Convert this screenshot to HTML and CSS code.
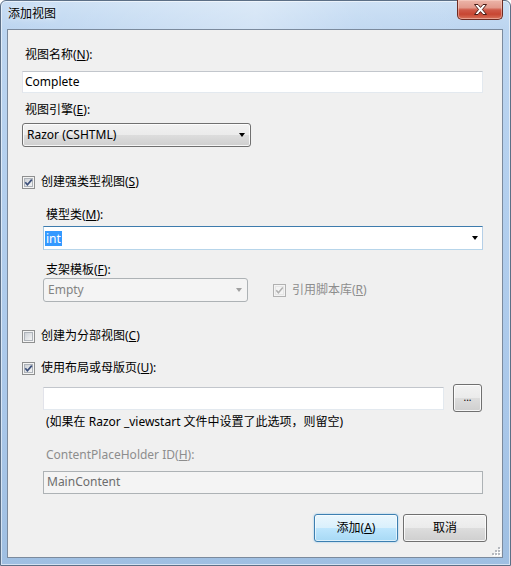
FILE: index.html
```html
<!DOCTYPE html>
<html lang="zh-CN">
<head>
<meta charset="utf-8">
<title>添加视图</title>
<link rel="stylesheet" href="styles.css">
</head>
<body>
<div class="window">
  <div class="titlebar">
    <span class="title">添加视图</span>
    <div class="close">
      <svg width="13" height="11" viewBox="0 0 13 11"><polygon points="0.5,0.5 4,0.5 6.5,3.4 9,0.5 12.5,0.5 8.4,5.5 12.5,10.5 9,10.5 6.5,7.6 4,10.5 0.5,10.5 4.6,5.5" fill="#fff" stroke="#4a1c16" stroke-width="1" stroke-linejoin="round"/></svg>
    </div>
  </div>
  <div class="client">
    <div class="label l1">视图名称(<u>N</u>):</div>
    <div class="textbox tb1">Complete</div>
    <div class="label l2">视图引擎(<u>E</u>):</div>
    <div class="dropbtn sel1"><span>Razor (CSHTML)</span><span class="arrow"></span></div>

    <div class="check-row c1">
      <svg class="cb" width="13" height="13" viewBox="0 0 13 13"><defs><linearGradient id="g1" x1="0" y1="0" x2="1" y2="1"><stop offset="0" stop-color="#cbcfd5"/><stop offset="1" stop-color="#f7f7f7"/></linearGradient></defs><rect x="0.5" y="0.5" width="12" height="12" fill="#f4f4f4" stroke="#8e8f8f"/><rect x="2.5" y="2.5" width="8" height="8" fill="url(#g1)" stroke="#aeb3b9"/><path d="M3.3 6.3 L5.4 8.8 L9.8 3.6" fill="none" stroke="#3c4f7a" stroke-width="1.7"/></svg>
      <span>创建强类型视图(<u>S</u>)</span>
    </div>

    <div class="indent">
      <div class="label l3">模型类(<u>M</u>):</div>
      <div class="combo"><span class="sel">int</span><span class="arrow"></span></div>
      <div class="label l4">支架模板(<u>F</u>):</div>
      <div class="row scaffold">
        <div class="dropbtn disabled sel2"><span>Empty</span><span class="arrow"></span></div>
        <div class="check-row disabled-check">
          <svg class="cb" width="13" height="13" viewBox="0 0 13 13"><rect x="0.5" y="0.5" width="12" height="12" fill="#f4f4f4" stroke="#b1b1b1"/><rect x="2.5" y="2.5" width="8" height="8" fill="#f4f4f4" stroke="#e6e6e6"/><path d="M3.3 6.3 L5.4 8.8 L9.8 3.6" fill="none" stroke="#b0b0b0" stroke-width="1.5"/></svg>
          <span>引用脚本库(<u>R</u>)</span>
        </div>
      </div>
    </div>

    <div class="check-row c2">
      <svg class="cb" width="13" height="13" viewBox="0 0 13 13"><defs><linearGradient id="g2" x1="0" y1="0" x2="1" y2="1"><stop offset="0" stop-color="#cbcfd5"/><stop offset="1" stop-color="#f7f7f7"/></linearGradient></defs><rect x="0.5" y="0.5" width="12" height="12" fill="#f4f4f4" stroke="#8e8f8f"/><rect x="2.5" y="2.5" width="8" height="8" fill="url(#g2)" stroke="#aeb3b9"/></svg>
      <span>创建为分部视图(<u>C</u>)</span>
    </div>
    <div class="check-row c3">
      <svg class="cb" width="13" height="13" viewBox="0 0 13 13"><defs><linearGradient id="g3" x1="0" y1="0" x2="1" y2="1"><stop offset="0" stop-color="#cbcfd5"/><stop offset="1" stop-color="#f7f7f7"/></linearGradient></defs><rect x="0.5" y="0.5" width="12" height="12" fill="#f4f4f4" stroke="#8e8f8f"/><rect x="2.5" y="2.5" width="8" height="8" fill="url(#g3)" stroke="#aeb3b9"/><path d="M3.3 6.3 L5.4 8.8 L9.8 3.6" fill="none" stroke="#3c4f7a" stroke-width="1.7"/></svg>
      <span>使用布局或母版页(<u>U</u>):</span>
    </div>

    <div class="indent">
      <div class="row layout-row">
        <div class="textbox tb3"></div>
        <div class="button browse">...</div>
      </div>
      <div class="label note">(如果在 Razor _viewstart 文件中设置了此选项，则留空)</div>
      <div class="label gray cph">ContentPlaceHolder ID(<u>H</u>):</div>
      <div class="textbox disabled-tb">MainContent</div>
    </div>

    <div class="buttons">
      <div class="button default">添加(<u>A</u>)</div>
      <div class="button">取消</div>
    </div>

    <svg class="grip" width="9" height="9" viewBox="0 0 9 9">
      <g fill="#fff"><rect x="7" y="1" width="2" height="2"/><rect x="4" y="4" width="2" height="2"/><rect x="7" y="4" width="2" height="2"/><rect x="1" y="7" width="2" height="2"/><rect x="4" y="7" width="2" height="2"/><rect x="7" y="7" width="2" height="2"/></g>
      <g fill="#b5b9bf"><rect x="6" y="0" width="2" height="2"/><rect x="3" y="3" width="2" height="2"/><rect x="6" y="3" width="2" height="2"/><rect x="0" y="6" width="2" height="2"/><rect x="3" y="6" width="2" height="2"/><rect x="6" y="6" width="2" height="2"/></g>
    </svg>
  </div>
</div>
</body>
</html>
```

FILE: styles.css
```css
html, body {
  margin: 0;
  padding: 0;
  width: 511px;
  height: 566px;
  overflow: hidden;
  background: #ffffff;
}

body {
  font-family: "Segoe UI", "Noto Sans", "Noto Sans CJK SC", sans-serif;
  font-size: 12px;
  color: #000;
}

.window {
  box-sizing: border-box;
  width: 511px;
  height: 566px;
  border: 1px solid #5c6f86;
  border-radius: 6px 6px 0 0;
  background: linear-gradient(to bottom, #c9def4 0px, #bcd5f0 28px, #b3cfee 200px, #a9c7e9 420px, #9fbfe2 100%);
  box-shadow: inset 0 0 0 1px rgba(255,255,255,0.55);
  display: flex;
  flex-direction: column;
}

.titlebar {
  height: 28px;
  flex: none;
  display: flex;
  align-items: flex-start;
  padding-left: 7px;
  background: linear-gradient(to right, rgba(255,255,255,0) 0%, rgba(255,255,255,0.25) 35%, rgba(255,255,255,0.35) 50%, rgba(255,255,255,0.1) 70%, rgba(255,255,255,0) 100%);
  border-radius: 6px 6px 0 0;
}

.title {
  margin-top: 4px;
  line-height: 16px;
  font-family: "Noto Sans CJK SC", sans-serif;
  color: #000;
  text-shadow: 0 0 6px rgba(255,255,255,0.9);
}

.close {
  margin-left: auto;
  margin-right: 7px;
  margin-top: -1px;
  width: 46px;
  height: 20px;
  box-sizing: border-box;
  border: 1px solid #6e2b22;
  border-top: none;
  border-radius: 0 0 5px 5px;
  background: linear-gradient(to bottom, #ecb5a9 0%, #e29a8c 40%, #cf5948 52%, #c84632 75%, #d8735c 100%);
  box-shadow: inset 0 0 0 1px rgba(255,220,210,0.45);
  display: flex;
  align-items: center;
  justify-content: center;
}

.client {
  flex: 1;
  margin: 0 7px 7px 6px;
  border: 1px solid #7b8a9d;
  background: #f0f0f0;
  padding: 0 19px 0 14px;
  position: relative;
  display: flex;
  flex-direction: column;
}

.label {
  line-height: 16px;
  padding-left: 3px;
  white-space: nowrap;
}

u { text-decoration: underline; text-underline-offset: 1px; }

.l1 { margin-top: 17px; }
.tb1 { margin-top: 8px; }
.l2 { margin-top: 9px; }
.sel1 { margin-top: 5px; width: 229px; }

.textbox {
  box-sizing: border-box;
  height: 22px;
  background: #fff;
  border: 1px solid;
  border-color: #c2c6cc #e3e9ef #e3e9ef #e2e3ea;
  padding: 0 2px;
  line-height: 20px;
  white-space: nowrap;
}

.dropbtn {
  box-sizing: border-box;
  height: 24px;
  border: 1px solid #707070;
  border-radius: 3px;
  background: linear-gradient(to bottom, #f2f2f2 0%, #ebebeb 50%, #dddddd 50%, #cfcfcf 100%);
  box-shadow: inset 0 0 0 1px rgba(255,255,255,0.8);
  display: flex;
  align-items: center;
  padding: 0 5px 0 4px;
  line-height: 16px;
}

.dropbtn .arrow, .combo .arrow {
  margin-left: auto;
  width: 0;
  height: 0;
  border-left: 3.5px solid transparent;
  border-right: 3.5px solid transparent;
  border-top: 4px solid #000;
}

.dropbtn.disabled {
  border-color: #adb2b5;
  background: #f4f4f4;
  box-shadow: none;
  color: #838383;
}
.dropbtn.disabled .arrow { border-top-color: #a0a0a0; }

.check-row {
  display: flex;
  align-items: center;
  height: 16px;
  line-height: 16px;
  white-space: nowrap;
}
.check-row .cb { flex: none; margin-right: 6px; }

.c1 { margin-top: 27px; }
.c2 { margin-top: 26px; }
.c3 { margin-top: 16px; }

.indent {
  margin-left: 21px;
  display: flex;
  flex-direction: column;
}

.l3 { margin-top: 17px; }

.combo {
  margin-top: 3px;
  box-sizing: border-box;
  height: 24px;
  background: #fff;
  border: 1px solid;
  border-color: #3d7bad #b5cfe7 #b7d5ea #a4c9e3;
  display: flex;
  align-items: center;
  padding: 0 4px 0 1px;
}
.combo .sel {
  background: #3399ff;
  color: #fff;
  line-height: 15px;
  padding: 0 1px;
}

.l4 { margin-top: 12px; }

.row { display: flex; align-items: center; }

.scaffold { height: 24px; }
.sel2 { width: 205px; }
.disabled-check { margin-left: 25px; color: #8d8d8d; }

.layout-row { margin-top: 8px; height: 28px; margin-right: 1px; }
.tb3 { flex: 1; height: 23px; }

.button {
  box-sizing: border-box;
  height: 28px;
  border: 1px solid #707070;
  border-radius: 3px;
  background: linear-gradient(to bottom, #f2f2f2 0%, #ebebeb 50%, #dddddd 50%, #cfcfcf 100%);
  box-shadow: inset 0 0 0 1px rgba(255,255,255,0.8);
  display: flex;
  align-items: center;
  justify-content: center;
  line-height: 16px;
  white-space: nowrap;
}

.browse { width: 29px; margin-left: 9px; font-size: 10px; padding-bottom: 2px; }

.note { margin-top: 2px; }
.gray { color: #8d8d8d; }
.cph { margin-top: 17px; }

.disabled-tb {
  margin-top: 8px;
  height: 23px;
  background: #f4f4f4;
  border-color: #adb2b5;
  color: #6d6d6d;
  padding-left: 3px;
}

.buttons {
  margin-top: 20px;
  margin-right: -4px;
  display: flex;
  justify-content: flex-end;
  gap: 5px;
}
.buttons .button { width: 84px; }
.button.default {
  border-color: #3c7fb1;
  background: linear-gradient(to bottom, #eaf6fd 0%, #d9f0fc 50%, #bee6fd 50%, #a7d9f5 100%);
  box-shadow: inset 0 0 0 1px rgba(255,255,255,0.6), 0 0 2px rgba(60,160,230,0.6);
}

.grip {
  position: absolute;
  right: 1px;
  bottom: 1px;
}
```
